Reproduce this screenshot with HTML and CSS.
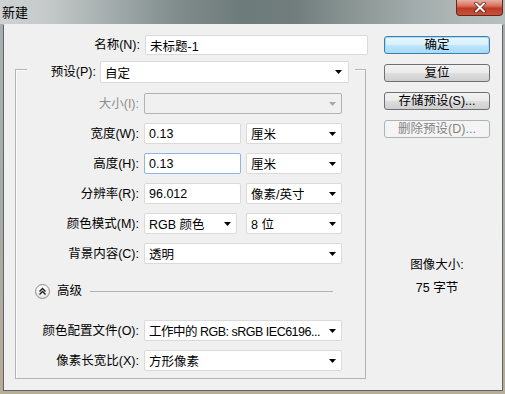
FILE: index.html
```html
<!DOCTYPE html>
<html>
<head>
<meta charset="utf-8">
<link rel="stylesheet" href="styles.css">
</head>
<body>
<div class="window">
  <div class="titlebar">
    <div class="title">新建</div>
    <div class="close">
      <svg width="14" height="11" viewBox="0 0 14 11"><path d="M3 1.5L11 9.5M11 1.5L3 9.5" stroke="#5a1a10" stroke-width="3.4" stroke-linecap="round"/><path d="M3 1.5L11 9.5M11 1.5L3 9.5" stroke="#ffffff" stroke-width="2" stroke-linecap="round"/></svg>
    </div>
  </div>
  <div class="client">
    <div class="left">
      <div class="name-row">
        <div class="label name-label">名称(N):</div>
        <div class="input name-input">未标题-1</div>
      </div>
      <div class="group">
        <div class="preset">
          <div class="label preset-label">预设(P):</div>
          <div class="combo preset-combo"><span>自定</span><svg class="arrow" width="7" height="4" viewBox="0 0 7 4"><path d="M0 0H7L3.5 4Z"/></svg></div>
        </div>
        <div class="row first">
          <div class="label disabled">大小(I):</div>
          <div class="combo full disabled-combo"><span></span><svg class="arrow" width="7" height="4" viewBox="0 0 7 4"><path d="M0 0H7L3.5 4Z" fill="#a8a8a8"/></svg></div>
        </div>
        <div class="row">
          <div class="label">宽度(W):</div>
          <div class="pair">
            <div class="input half">0.13</div>
            <div class="combo unit"><span>厘米</span><svg class="arrow" width="7" height="4" viewBox="0 0 7 4"><path d="M0 0H7L3.5 4Z"/></svg></div>
          </div>
        </div>
        <div class="row">
          <div class="label">高度(H):</div>
          <div class="pair">
            <div class="input half focused">0.13</div>
            <div class="combo unit"><span>厘米</span><svg class="arrow" width="7" height="4" viewBox="0 0 7 4"><path d="M0 0H7L3.5 4Z"/></svg></div>
          </div>
        </div>
        <div class="row">
          <div class="label">分辨率(R):</div>
          <div class="pair">
            <div class="input half">96.012</div>
            <div class="combo unit"><span>像素/英寸</span><svg class="arrow" width="7" height="4" viewBox="0 0 7 4"><path d="M0 0H7L3.5 4Z"/></svg></div>
          </div>
        </div>
        <div class="row">
          <div class="label">颜色模式(M):</div>
          <div class="pair">
            <div class="combo mode"><span>RGB 颜色</span><svg class="arrow" width="7" height="4" viewBox="0 0 7 4"><path d="M0 0H7L3.5 4Z"/></svg></div>
            <div class="combo unit"><span>8 位</span><svg class="arrow" width="7" height="4" viewBox="0 0 7 4"><path d="M0 0H7L3.5 4Z"/></svg></div>
          </div>
        </div>
        <div class="row">
          <div class="label">背景内容(C):</div>
          <div class="combo full"><span>透明</span><svg class="arrow" width="7" height="4" viewBox="0 0 7 4"><path d="M0 0H7L3.5 4Z"/></svg></div>
        </div>
        <div class="adv-row">
          <div class="adv-btn">
            <svg width="13" height="13" viewBox="0 0 13 13"><path d="M3.5 6.5L6.5 3.5L9.5 6.5M3.5 9.5L6.5 6.5L9.5 9.5" fill="none" stroke="#1a1a1a" stroke-width="1.4"/></svg>
          </div>
          <div class="adv-text">高级</div>
          <div class="adv-line"></div>
        </div>
        <div class="row profile">
          <div class="label">颜色配置文件(O):</div>
          <div class="combo full"><span class="tight">工作中的 RGB: sRGB IEC6196...</span><svg class="arrow" width="7" height="4" viewBox="0 0 7 4"><path d="M0 0H7L3.5 4Z"/></svg></div>
        </div>
        <div class="row">
          <div class="label">像素长宽比(X):</div>
          <div class="combo full"><span>方形像素</span><svg class="arrow" width="7" height="4" viewBox="0 0 7 4"><path d="M0 0H7L3.5 4Z"/></svg></div>
        </div>
      </div>
    </div>
    <div class="right">
      <div class="btn default">确定</div>
      <div class="btn">复位</div>
      <div class="btn">存储预设(S)...</div>
      <div class="btn disabled-btn">删除预设(D)...</div>
      <div class="info">
        <div class="info-line">图像大小:</div>
        <div class="info-line">75 字节</div>
      </div>
    </div>
  </div>
</div>
</body>
</html>
```

FILE: styles.css
```css
body {
  margin: 0;
  font-family: "Liberation Sans", "Noto Sans CJK SC", sans-serif;
  font-size: 12.5px;
  color: #000;
}

.window {
  width: 505px;
  height: 394px;
  overflow: hidden;
  background: linear-gradient(to bottom, #a7afaf 0%, #a9aca6 60%, #b8ad96 100%);
}

.titlebar {
  height: 24px;
  display: flex;
  justify-content: space-between;
  align-items: flex-start;
  background: linear-gradient(to right, #cfd3d3 0%, #c3c8c8 10%, #a3acac 22%, #7f8c8b 35%, #6d7b7a 48%, #707d7c 58%, #8a9594 70%, #a2abab 82%, #b0b8b8 92%, #b7bebe 100%);
}

.title {
  padding: 4px 0 0 2px;
  line-height: 17px;
  font-size: 13px;
}

.close {
  box-sizing: border-box;
  width: 47px;
  height: 16px;
  margin-right: 2px;
  border: 1px solid #6b2518;
  border-top: none;
  border-radius: 0 0 4px 4px;
  background: linear-gradient(to bottom, #e8b0a3 0%, #d5705c 40%, #bf3a24 55%, #c4533c 100%);
  display: flex;
  align-items: center;
  justify-content: center;
}

.client {
  box-sizing: border-box;
  margin-left: 3px;
  width: 500px;
  height: 367px;
  border: 1px solid #606466;
  border-top-color: #eef0f0;
  background: #f0f0f0;
  display: flex;
}

.left {
  width: 380px;
}

.label {
  text-align: right;
  white-space: nowrap;
  line-height: 16px;
}

.name-row {
  display: flex;
  align-items: center;
  gap: 5px;
  margin-top: 10px;
  height: 20px;
}

.name-label {
  width: 136px;
}

.input {
  box-sizing: border-box;
  background: #fff;
  border: 1px solid #dadada;
  border-radius: 2px;
  padding-left: 4px;
  display: flex;
  align-items: center;
  white-space: nowrap;
}

.name-input {
  width: 223px;
  height: 20px;
}

.focused {
  border-color: #8cb6e4;
}

.group {
  box-sizing: border-box;
  margin: 14px 0 0 11px;
  width: 351px;
  height: 310px;
  border: 1px solid #b4b4b4;
  box-shadow: inset 1px 1px 0 #fbfbfb;
}

.preset {
  margin: -9px 0 0 11px;
  width: 328px;
  height: 22px;
  background: #f0f0f0;
  display: flex;
  align-items: center;
  gap: 4px;
}

.preset-label {
  width: 69px;
}

.combo {
  box-sizing: border-box;
  height: 21px;
  background: #fff;
  border: 1px solid #dadada;
  border-radius: 2px;
  padding: 0 5px 0 4px;
  display: flex;
  align-items: center;
  justify-content: space-between;
  gap: 4px;
  white-space: nowrap;
}

.combo span {
  overflow: hidden;
}

.combo .tight {
  letter-spacing: -0.5px;
  overflow: visible;
}

.arrow {
  flex: none;
}

.preset-combo {
  width: 249px;
  height: 22px;
  padding-right: 6px;
}

.row {
  display: flex;
  align-items: center;
  gap: 5px;
  height: 21px;
  margin-top: 9px;
}

.row.first {
  margin-top: 10px;
}

.row .label {
  width: 123px;
}

.disabled {
  color: #8d8d8d;
}

.pair {
  display: flex;
  gap: 5px;
}

.input.half {
  width: 97px;
  height: 21px;
}

.combo.unit {
  width: 96px;
}

.combo.mode {
  width: 93px;
  margin-right: 4px;
}

.combo.full {
  width: 198px;
}

.disabled-combo {
  background: #f0f0f0;
  border-color: #b2b2b2;
}

.adv-row {
  display: flex;
  align-items: center;
  height: 20px;
  margin: 17px 32px 0 19px;
}

.adv-btn {
  box-sizing: border-box;
  width: 15px;
  height: 15px;
  border-radius: 50%;
  border: 1px solid #8a8c8e;
  background: radial-gradient(circle at 50% 30%, #ffffff 0%, #f0f0f0 55%, #d4d4d4 100%);
  display: flex;
  align-items: center;
  justify-content: center;
}

.adv-text {
  margin-left: 7px;
  line-height: 16px;
}

.adv-line {
  flex: 1;
  margin-left: 8px;
  height: 1px;
  background: #b4b4b4;
}

.row.profile {
  margin-top: 19px;
}

.right {
  width: 106px;
  display: flex;
  flex-direction: column;
}

.btn {
  box-sizing: border-box;
  height: 18px;
  margin-top: 10px;
  border: 1px solid #707070;
  border-radius: 3px;
  background: linear-gradient(to bottom, #f2f2f2 0%, #ebebeb 48%, #dddddd 52%, #cfcfcf 100%);
  display: flex;
  align-items: center;
  justify-content: center;
  line-height: 16px;
  white-space: nowrap;
}

.btn.default {
  margin-top: 11px;
  border-color: #3c7fb1;
  box-shadow: inset 0 0 0 1px #a8dcf4;
  background: linear-gradient(to bottom, #eaf6fd 0%, #d9f0fc 48%, #bee6fd 52%, #a7d9f5 100%);
}

.btn.disabled-btn {
  border-color: #adb2b5;
  background: #f4f4f4;
  color: #838383;
}

.info {
  margin-top: 119px;
  display: flex;
  flex-direction: column;
  align-items: center;
}

.info-line {
  line-height: 16px;
  height: 23px;
}
```
